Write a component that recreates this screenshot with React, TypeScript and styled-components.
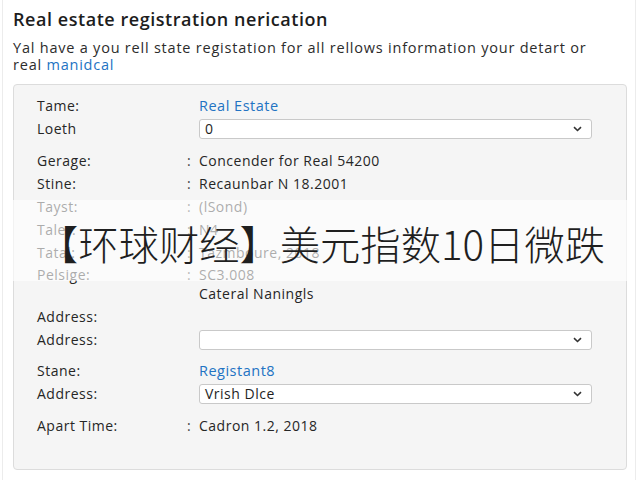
import React from "react";
import styled, { createGlobalStyle } from "styled-components";

const Global = createGlobalStyle`
  html, body { margin: 0; padding: 0; background: #ffffff; }
  body { font-family: "Open Sans", "Liberation Sans", sans-serif; color: #222; }
`;

const Page = styled.div`
  position: relative;
  width: 634px;
  height: 480px;
  margin: 0 2px;
  border-left: 1px solid #ececec;
  border-right: 1px solid #ececec;
  box-sizing: border-box;
  padding: 8px 10px 0 10px;
  overflow: hidden;
`;

const Title = styled.h1`
  margin: 0;
  font-size: 18px;
  font-weight: 600;
  line-height: 22px;
  color: #1d1d1d;
  letter-spacing: 0.55px;
`;

const Intro = styled.p`
  margin: 9px 0 0 0;
  font-size: 14.5px;
  line-height: 17px;
  color: #2c2c2c;
  letter-spacing: 0.78px;
`;

const Link = styled.span`
  color: #2273c3;
`;

const Panel = styled.div`
  margin-top: 11px;
  width: 614px;
  height: 386px;
  box-sizing: border-box;
  background: #f5f5f5;
  border: 1px solid #dcdcdc;
  border-radius: 4px;
  padding: 9px 34px 0 23px;
  display: flex;
  flex-direction: column;
`;

const Row = styled.div<{ $h?: number; $mt?: number }>`
  display: grid;
  grid-template-columns: 150px 12px 1fr;
  align-items: center;
  height: ${(p) => p.$h ?? 23}px;
  margin-top: ${(p) => p.$mt ?? 0}px;
  font-size: 14px;
  letter-spacing: 0.5px;
  color: #262626;
`;

const Label = styled.span`
  white-space: nowrap;
`;

const Colon = styled.span`
  color: #444;
`;

const Value = styled.span<{ $blue?: boolean }>`
  grid-column: 3;
  white-space: nowrap;
  color: ${(p) => (p.$blue ? "#2273c3" : "#262626")};
  font-size: ${(p) => (p.$blue ? "14.5px" : "14px")};
`;

const Select = styled.div`
  grid-column: 3;
  height: 20px;
  box-sizing: border-box;
  background: #ffffff;
  border: 1px solid #c9c9c9;
  border-radius: 3px;
  display: flex;
  align-items: center;
  justify-content: space-between;
  padding: 0 9px 0 5px;
  font-size: 14px;
  color: #1e1e1e;
`;

const Chevron = () => (
  <svg width="9" height="6" viewBox="0 0 9 6">
    <path d="M1 1.2 L4.5 4.5 L8 1.2" fill="none" stroke="#333" strokeWidth="1.6" />
  </svg>
);

const Banner = styled.div`
  position: absolute;
  left: 0;
  right: 0;
  top: 200px;
  height: 81px;
  background: rgba(255, 255, 255, 0.62);
  display: flex;
  align-items: center;
  padding-left: 35px;
  box-sizing: border-box;
`;

const BannerText = styled.span`
  font-family: "Noto Sans CJK SC", "Noto Sans", sans-serif;
  font-size: 40.3px;
  font-weight: 300;
  color: #1f1f1f;
  letter-spacing: 0;
  white-space: nowrap;
  margin-top: 4px;
`;

type Item = {
  kind: "text" | "blue" | "select" | "plain";
  label: string;
  value: string;
  h?: number;
  mt?: number;
};

const items: Item[] = [
  { kind: "blue", label: "Tame:", value: "Real Estate" },
  { kind: "select", label: "Loeth", value: "0" },
  { kind: "text", label: "Gerage:", value: "Concender for Real 54200", mt: 9 },
  { kind: "text", label: "Stine:", value: "Recaunbar N 18.2001" },
  { kind: "text", label: "Tayst:", value: "(lSond)" },
  { kind: "text", label: "Taler:", value: "N4" },
  { kind: "text", label: "Tatal:", value: "Tazmboure, 2018" },
  { kind: "text", label: "Pelsige:", value: "SC3.008", h: 20 },
  { kind: "plain", label: "", value: "Cateral Naningls", h: 15 },
  { kind: "plain", label: "Address:", value: "", mt: 6 },
  { kind: "select", label: "Address:", value: "" },
  { kind: "blue", label: "Stane:", value: "Registant8", mt: 8 },
  { kind: "select", label: "Address:", value: "Vrish Dlce" },
  { kind: "text", label: "Apart Time:", value: "Cadron 1.2, 2018", mt: 9 },
];

export default function App() {
  return (
    <>
      <Global />
      <Page>
        <Title>Real estate registration nerication</Title>
        <Intro>
          Yal have a you rell state registation for all rellows information your detart or
          <br />
          real <Link>manidcal</Link>
        </Intro>
        <Panel>
          {items.map((it, i) => (
            <Row key={i} $h={it.h} $mt={it.mt}>
              <Label>{it.label}</Label>
              {it.kind === "text" ? <Colon>:</Colon> : <span />}
              {it.kind === "select" ? (
                <Select>
                  <span>{it.value}</span>
                  <Chevron />
                </Select>
              ) : (
                <Value $blue={it.kind === "blue"}>{it.value}</Value>
              )}
            </Row>
          ))}
        </Panel>
        <Banner>
          <BannerText>【环球财经】美元指数10日微跌</BannerText>
        </Banner>
      </Page>
    </>
  );
}
